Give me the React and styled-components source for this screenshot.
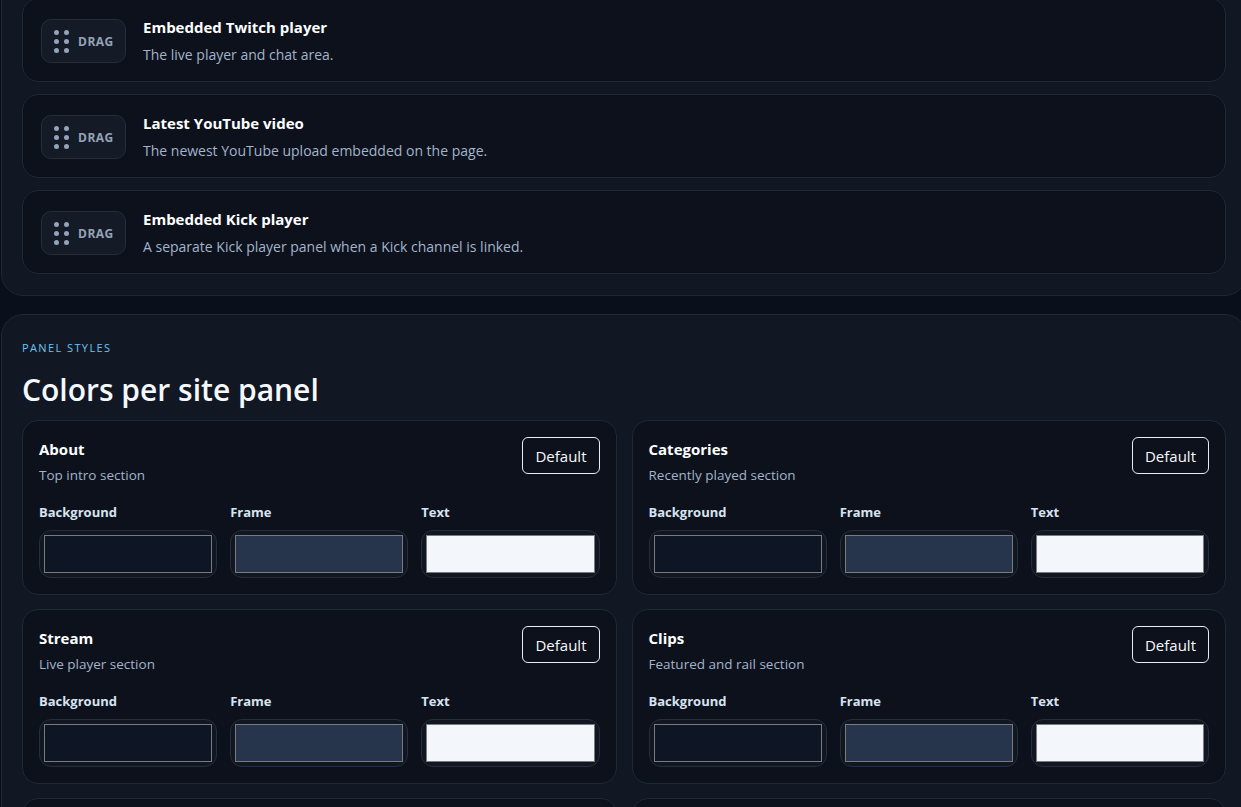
import styled, { createGlobalStyle } from "styled-components";

const GlobalStyle = createGlobalStyle`
  html, body {
    margin: 0;
    padding: 0;
    overflow: hidden;
    background: #0a101b;
  }
  body {
    font-family: "Open Sans", "Noto Sans", "Liberation Sans", sans-serif;
    color: #f8fafc;
  }
`;

const Page = styled.div`
  width: 1248px;
  margin-top: -23px;
  padding: 0 1px;
  box-sizing: border-box;
  display: flex;
  flex-direction: column;
  gap: 18px;
`;

const Panel = styled.section`
  background: #111723;
  border: 1px solid #1f2733;
  border-radius: 22px;
  padding: ${(p) => (p.$head ? "24px 20px 20px" : "20px 20px 21px")};
  display: flex;
  flex-direction: column;
  gap: 12px;
`;

const ItemCard = styled.div`
  background: #0c111c;
  border: 1px solid #1f2835;
  border-radius: 16px;
  padding: 18px 18px 16px;
  display: flex;
  align-items: center;
  gap: 17px;
`;

const DragHandle = styled.div`
  width: 85px;
  height: 44px;
  box-sizing: border-box;
  border: 1px solid #252d3a;
  background: #151b26;
  border-radius: 10px;
  display: flex;
  align-items: center;
  padding-left: 12px;
  gap: 9px;
  color: #94a3b8;
  font-size: 12px;
  font-weight: 700;
  letter-spacing: 0.5px;
`;

const Dots = styled.div`
  display: grid;
  grid-template-columns: 5px 5px;
  gap: 4px 5px;
  > span {
    width: 5px;
    height: 5px;
    border-radius: 50%;
    background: #94a3b8;
  }
`;

const ItemText = styled.div`
  display: flex;
  flex-direction: column;
  gap: 8px;
`;

const ItemTitle = styled.div`
  font-size: 15px;
  font-weight: 700;
  line-height: 20px;
  color: #ffffff;
`;

const ItemDesc = styled.div`
  font-size: 14px;
  line-height: 20px;
  color: #a3b4cb;
`;

const Eyebrow = styled.div`
  font-size: 11px;
  line-height: 18px;
  letter-spacing: 1.4px;
  color: #6cc4f2;
  text-transform: uppercase;
`;

const Heading = styled.h2`
  margin: 13px 0 -2px;
  font-size: 30px;
  line-height: 40px;
  font-weight: 600;
  color: #f5f8fc;
`;

const StyleGrid = styled.div`
  display: grid;
  grid-template-columns: 1fr 1fr;
  gap: 14px 15px;
`;

const StyleCard = styled.div`
  background: #0c111c;
  border: 1px solid #1f2835;
  border-radius: 16px;
  padding: 16px;
  display: flex;
  flex-direction: column;
  gap: 19px;
`;

const CardHead = styled.div`
  display: flex;
  justify-content: space-between;
  align-items: flex-start;
`;

const CardTitle = styled.div`
  margin-top: 2px;
  font-size: 15px;
  font-weight: 700;
  line-height: 20px;
  color: #ffffff;
`;

const CardSub = styled.div`
  margin-top: 7px;
  font-size: 13.5px;
  line-height: 18px;
  color: #a3b4cb;
`;

const DefaultButton = styled.button`
  height: 37px;
  padding: 0 12px;
  background: transparent;
  border: 1px solid #e8edf4;
  border-radius: 6px;
  color: #f8fafc;
  font-family: inherit;
  font-size: 15px;
`;

const Fields = styled.div`
  display: grid;
  grid-template-columns: repeat(3, 1fr);
  gap: 13px;
`;

const Field = styled.label`
  display: flex;
  flex-direction: column;
  gap: 9px;
  font-size: 13px;
  font-weight: 700;
  line-height: 18px;
  color: #d8e3f1;
`;

const ColorInput = styled.input`
  -webkit-appearance: none;
  appearance: none;
  width: 100%;
  height: 48px;
  box-sizing: border-box;
  margin: 0;
  padding: 4px;
  background: #111722;
  border: 1px solid #262e3b;
  border-radius: 12px;
  cursor: pointer;
  &::-webkit-color-swatch-wrapper {
    padding: 0;
  }
  &::-webkit-color-swatch {
    border: 1px solid #7b7b7b;
    border-radius: 0;
  }
`;

const items = [
  ["Embedded Twitch player", "The live player and chat area."],
  ["Latest YouTube video", "The newest YouTube upload embedded on the page."],
  ["Embedded Kick player", "A separate Kick player panel when a Kick channel is linked."],
];

const panels = [
  ["About", "Top intro section"],
  ["Categories", "Recently played section"],
  ["Stream", "Live player section"],
  ["Clips", "Featured and rail section"],
  ["Schedule", "Upcoming streams section"],
  ["Socials", "Links section"],
];

const swatches = [
  ["Background", "#0e1626"],
  ["Frame", "#26344c"],
  ["Text", "#f3f6fb"],
];

const App = () => (
  <>
    <GlobalStyle />
    <Page>
      <Panel>
        {items.map(([title, desc]) => (
          <ItemCard key={title}>
            <DragHandle>
              <Dots>
                {Array.from({ length: 6 }).map((_, i) => (
                  <span key={i} />
                ))}
              </Dots>
              DRAG
            </DragHandle>
            <ItemText>
              <ItemTitle>{title}</ItemTitle>
              <ItemDesc>{desc}</ItemDesc>
            </ItemText>
          </ItemCard>
        ))}
      </Panel>
      <Panel $head>
        <div>
          <Eyebrow>Panel styles</Eyebrow>
          <Heading>Colors per site panel</Heading>
        </div>
        <StyleGrid>
          {panels.map(([title, sub]) => (
            <StyleCard key={title}>
              <CardHead>
                <div>
                  <CardTitle>{title}</CardTitle>
                  <CardSub>{sub}</CardSub>
                </div>
                <DefaultButton>Default</DefaultButton>
              </CardHead>
              <Fields>
                {swatches.map(([label, value]) => (
                  <Field key={label}>
                    {label}
                    <ColorInput type="color" defaultValue={value} />
                  </Field>
                ))}
              </Fields>
            </StyleCard>
          ))}
        </StyleGrid>
      </Panel>
    </Page>
  </>
);

export default App;
